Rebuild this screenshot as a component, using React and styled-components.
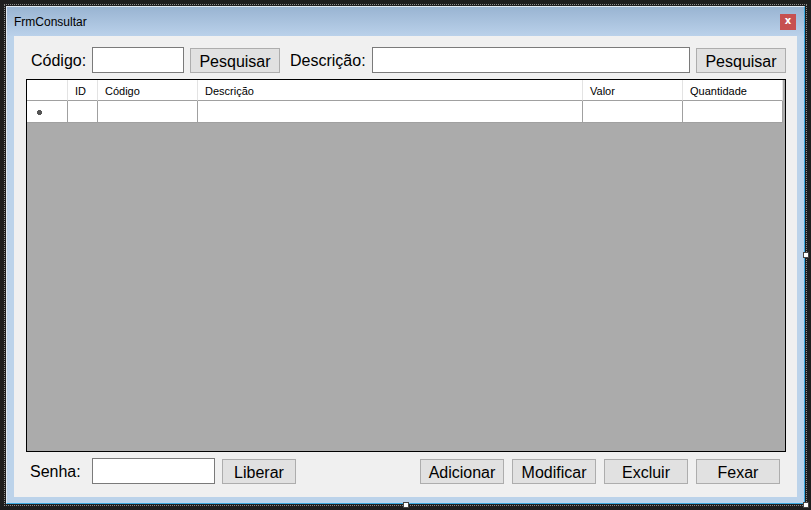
import styled, { createGlobalStyle } from 'styled-components';

const GlobalStyle = createGlobalStyle`
  html, body {
    margin: 0;
    padding: 0;
    background: #1e1e1e;
    width: 811px;
    height: 510px;
    overflow: hidden;
  }
  * { box-sizing: border-box; }
`;

const Page = styled.div`
  padding: 4px 0 0 4px;
`;

const Surface = styled.div`
  position: relative;
  display: inline-block;
  padding: 1px;
  border: 1px dotted #8a8a8a;
`;

const Handle = styled.span`
  position: absolute;
  width: 6px;
  height: 6px;
  background: #fff;
  border: 1px solid #444;
`;

const Window = styled.div`
  width: 799px;
  height: 498px;
  display: flex;
  flex-direction: column;
  background: #bcd3ea;
  border-left: 1px solid #dfe8f2;
  border-top: 1px solid #dfe8f2;
  border-right: 1px solid #39a7de;
  border-bottom: 1px solid #39a7de;
  padding: 0 7px 6px 7px;
`;

const TitleBar = styled.div`
  height: 29px;
  margin: 0 -7px;
  padding: 0 8px 0 7px;
  display: flex;
  align-items: center;
  justify-content: space-between;
  background: linear-gradient(#99b4d2, #bad1ea);
  font-family: 'Liberation Sans', Arial, sans-serif;
  font-size: 12px;
  color: #000;
`;

const CloseButton = styled.div`
  width: 16px;
  height: 16px;
  background: #c75050;
  color: #fff;
  font-family: 'DejaVu Sans', sans-serif;
  font-weight: bold;
  font-size: 10px;
  line-height: 14px;
  text-align: center;
`;

const Client = styled.div`
  flex: 1;
  background: #f0f0f0;
  display: flex;
  flex-direction: column;
  font-family: 'Liberation Sans', Arial, sans-serif;
  font-size: 16px;
  color: #000;
`;

const TopRow = styled.div`
  display: flex;
  align-items: center;
  height: 26px;
  margin-top: 11px;
  padding-left: 17px;
`;

const BottomRow = styled.div`
  display: flex;
  align-items: center;
  justify-content: space-between;
  height: 26px;
  margin-top: 6px;
  padding: 0 17px 0 16px;
`;

const Group = styled.div`
  display: flex;
  align-items: center;
  gap: ${({ $gap }) => $gap || 0}px;
`;

const Label = styled.span`
  width: ${({ $w }) => $w}px;
  margin-left: ${({ $ml }) => $ml || 0}px;
  padding-top: 2px;
  white-space: nowrap;
`;

const TextBox = styled.div`
  width: ${({ $w }) => $w}px;
  height: 26px;
  background: #fff;
  border: 1px solid #7a7a7a;
`;

const Button = styled.div`
  width: ${({ $w }) => $w}px;
  height: 25px;
  margin-left: ${({ $ml }) => $ml || 0}px;
  margin-top: 1px;
  padding-top: 2px;
  background: #e1e1e1;
  border: 1px solid #adadad;
  display: flex;
  align-items: center;
  justify-content: center;
  line-height: 1;
`;

const Grid = styled.div`
  margin: 6px 0 0 12px;
  width: 760px;
  height: 373px;
  border: 1px solid #000;
  background: #ababab;
  font-family: 'Liberation Sans', Arial, sans-serif;
  font-size: 11px;
`;

const GridRow = styled.div`
  display: flex;
  height: ${({ $h }) => $h}px;
`;

const Cell = styled.div`
  width: ${({ $w }) => $w}px;
  background: #fff;
  border-right: 1px solid ${({ $head }) => ($head ? '#e3e3e3' : '#a0a0a0')};
  border-bottom: 1px solid #a0a0a0;
  padding-left: 7px;
  padding-top: 1px;
  display: flex;
  align-items: center;
`;

const columns = [
  { title: '', w: 41 },
  { title: 'ID', w: 30 },
  { title: 'Código', w: 100 },
  { title: 'Descrição', w: 385 },
  { title: 'Valor', w: 100 },
  { title: 'Quantidade', w: 100 },
];

function Star() {
  return (
    <svg width="5" height="5" viewBox="0 0 5 5" style={{ marginLeft: 3, marginTop: 1 }}>
      <rect x="1" y="0" width="3" height="5" fill="#555" />
      <rect x="0" y="1" width="5" height="3" fill="#555" />
    </svg>
  );
}

export default function App() {
  return (
    <Page>
      <GlobalStyle />
      <Surface>
        <Window>
          <TitleBar>
            <span>FrmConsultar</span>
            <CloseButton>x</CloseButton>
          </TitleBar>
          <Client>
            <TopRow>
              <Label $w={61}>Código:</Label>
              <TextBox $w={92} />
              <Button $w={90} $ml={6}>Pesquisar</Button>
              <Label $w={82} $ml={10}>Descrição:</Label>
              <TextBox $w={318} />
              <Button $w={90} $ml={6}>Pesquisar</Button>
            </TopRow>
            <Grid>
              <GridRow $h={21}>
                {columns.map((c, i) => (
                  <Cell key={i} $w={c.w} $head>{c.title}</Cell>
                ))}
              </GridRow>
              <GridRow $h={22}>
                {columns.map((c, i) => (
                  <Cell key={i} $w={c.w}>{i === 0 && <Star />}</Cell>
                ))}
              </GridRow>
            </Grid>
            <BottomRow>
              <Group>
                <Label $w={62}>Senha:</Label>
                <TextBox $w={123} />
                <Button $w={74} $ml={7}>Liberar</Button>
              </Group>
              <Group $gap={8}>
                <Button $w={84}>Adicionar</Button>
                <Button $w={84}>Modificar</Button>
                <Button $w={84}>Excluir</Button>
                <Button $w={84}>Fexar</Button>
              </Group>
            </BottomRow>
          </Client>
        </Window>
        <Handle style={{ left: 398, top: 497 }} />
        <Handle style={{ left: 798, top: 247 }} />
        <Handle style={{ left: 798, top: 497 }} />
      </Surface>
    </Page>
  );
}
